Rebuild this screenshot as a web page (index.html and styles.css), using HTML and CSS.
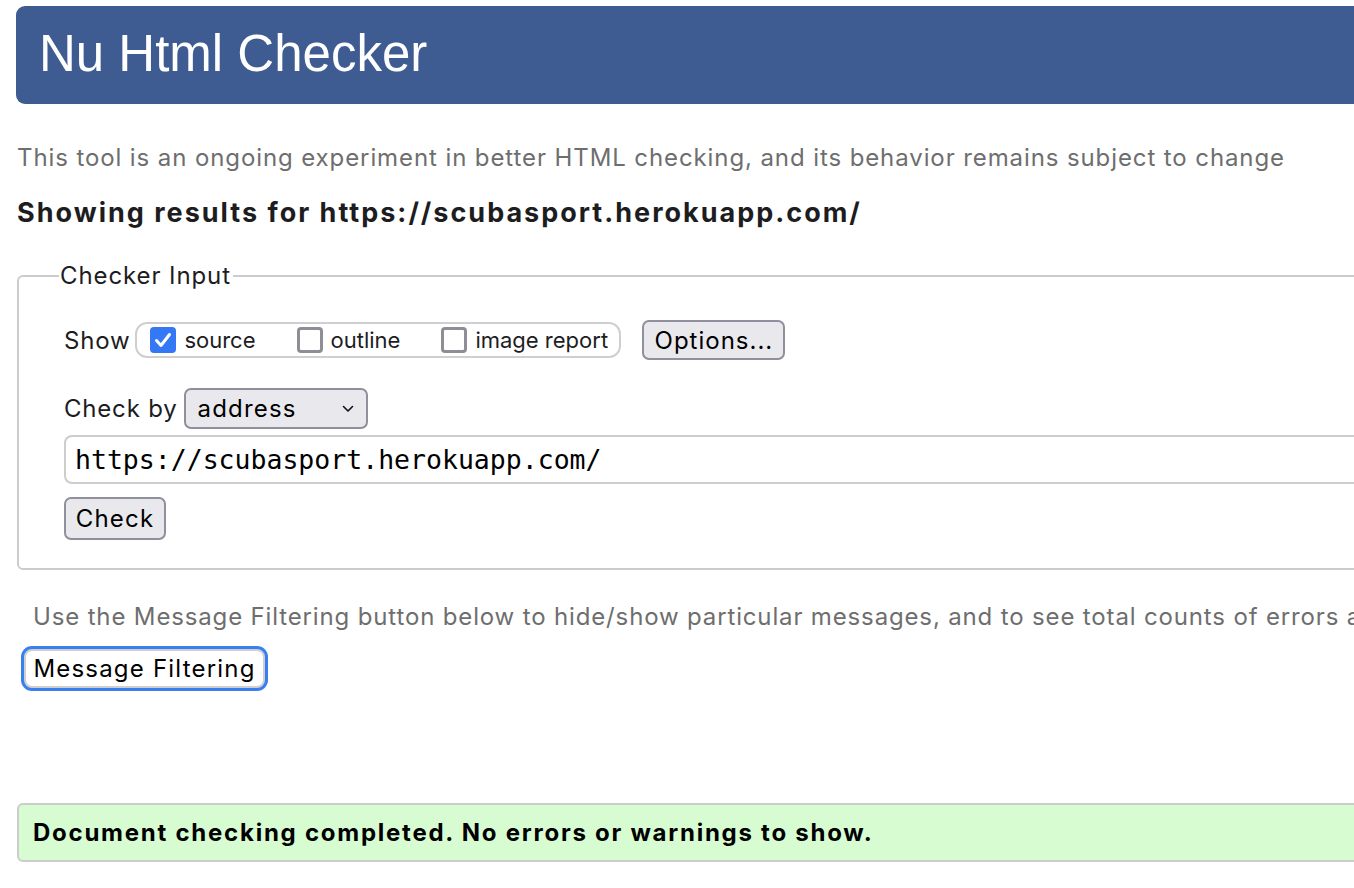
FILE: index.html
```html
<!DOCTYPE html>
<html lang="en">
<head>
<meta charset="utf-8">
<title>Nu Html Checker</title>
<link rel="stylesheet" href="styles.css">
</head>
<body>
<div class="page">
  <header class="masthead"><h1>Nu Html Checker</h1></header>
  <p class="tagline">This tool is an ongoing experiment in better HTML checking, and its behavior remains subject to change</p>
  <h2 class="results-title">Showing results for https://scubasport.herokuapp.com/</h2>

  <fieldset class="checker">
    <legend>Checker Input</legend>
    <div class="row show-row">
      <span class="row-label">Show</span>
      <div class="show-group">
        <label class="opt"><span class="cb checked"><svg viewBox="0 0 26 26" width="26" height="26"><path d="M6.5 13.5 L11 18.5 L19.5 7.5" fill="none" stroke="#fff" stroke-width="3" stroke-linecap="round" stroke-linejoin="round"/></svg></span><span>source</span></label>
        <label class="opt"><span class="cb"></span><span>outline</span></label>
        <label class="opt"><span class="cb"></span><span>image report</span></label>
      </div>
      <button class="btn options">Options...</button>
    </div>
    <div class="row by-row">
      <span class="row-label">Check by</span>
      <div class="select"><span>address</span><svg viewBox="0 0 12 8" width="12" height="8"><path d="M1.5 1.5 L6 6 L10.5 1.5" fill="none" stroke="#111" stroke-width="1.6" stroke-linecap="round" stroke-linejoin="round"/></svg></div>
    </div>
    <div class="url">https://scubasport.herokuapp.com/</div>
    <button class="btn check">Check</button>
  </fieldset>

  <p class="filter-note">Use the Message Filtering button below to hide/show particular messages, and to see total counts of errors and warnings.</p>
  <button class="btn filter">Message Filtering</button>

  <div class="success">Document checking completed. No errors or warnings to show.</div>
</div>
</body>
</html>
```
FILE: styles.css
```css
html, body {
  margin: 0;
  padding: 0;
  overflow: hidden;
  background: #fff;
}
body {
  font-family: Inter, "Liberation Sans", Arial, sans-serif;
  color: #1d1d1f;
}
.page {
  width: 1420px;
  padding: 6px 0 0 16px;
}
.masthead {
  height: 98px;
  background: #3e5c92;
  border-radius: 9px;
  display: flex;
  align-items: center;
  padding-left: 23px;
}
.masthead h1 {
  margin: 0;
  color: #fff;
  font-family: "Liberation Sans", Arial, sans-serif;
  font-weight: normal;
  font-size: 51px;
  line-height: 1;
  position: relative;
  top: -2px;
}
.tagline {
  margin: 40px 0 0 1px;
  font-size: 24px;
  letter-spacing: 0.9px;
  line-height: 28px;
  color: #6e6e6e;
  white-space: nowrap;
}
.results-title {
  margin: 26px 0 0 1px;
  font-size: 27px;
  letter-spacing: 2px;
  line-height: 30px;
  font-weight: bold;
  color: #1d1d1f;
  white-space: nowrap;
}
.checker {
  margin: 33px 0 0 1px;
  border: 2px solid #cccccc;
  border-radius: 6px;
  padding: 28px 0 28px 45px;
  min-width: 0;
}
.checker legend {
  font-size: 24px;
  letter-spacing: 0.9px;
  padding: 0 2px 0 1px;
  margin-left: -5px;
  color: #1d1d1f;
}
.row {
  display: flex;
  align-items: center;
}
.row-label {
  font-size: 24px;
  letter-spacing: 0.8px;
  color: #1d1d1f;
  white-space: nowrap;
}
.show-row {
  height: 44px;
}
.show-group {
  flex-shrink: 0;
  margin-left: 5px;
  height: 36px;
  box-sizing: border-box;
  border: 2px solid #cfcfcf;
  border-radius: 12px;
  display: flex;
  align-items: center;
  padding: 0 12px 0 13px;
  width: 486px;
}
.opt {
  display: flex;
  align-items: center;
  flex-shrink: 0;
  white-space: nowrap;
  font-size: 22px;
  color: #1d1d1f;
  gap: 8px;
  margin-right: 41px;
}
.opt:last-child { margin-right: 0; }
.cb {
  flex-shrink: 0;
  width: 26px;
  height: 26px;
  box-sizing: border-box;
  border: 3px solid #8e8e96;
  border-radius: 4px;
  background: #fff;
  display: block;
}
.cb.checked {
  background: #3478f6;
  border: none;
}
.cb svg { display: block; }
.btn {
  font-family: Inter, "Liberation Sans", Arial, sans-serif;
  font-size: 24px;
  letter-spacing: 1px;
  color: #000;
  background: #e9e9ed;
  border: 2px solid #8f8f9d;
  border-radius: 7px;
  padding: 0;
  cursor: pointer;
  white-space: nowrap;
}
.options {
  flex-shrink: 0;
  margin-left: 21px;
  width: 143px;
  height: 40px;
}
.by-row {
  margin-top: 26px;
  height: 41px;
}
.select {
  flex-shrink: 0;
  margin-left: 7px;
  width: 184px;
  height: 41px;
  box-sizing: border-box;
  background: #e9e9ed;
  border: 2px solid #8f8f9d;
  border-radius: 7px;
  display: flex;
  align-items: center;
  justify-content: space-between;
  padding: 0 12px 0 11px;
  font-size: 24px;
  letter-spacing: 1.2px;
  color: #000;
}
.url {
  margin-top: 6px;
  height: 49px;
  box-sizing: border-box;
  border: 2px solid #cdcdcd;
  border-right: none;
  border-radius: 8px 0 0 8px;
  display: flex;
  align-items: center;
  padding-left: 9px;
  font-family: "DejaVu Sans Mono", "Liberation Mono", monospace;
  font-size: 26.5px;
  color: #000;
}
.check {
  display: block;
  margin-top: 13px;
  width: 102px;
  height: 43px;
  letter-spacing: 1.2px;
}
.filter-note {
  margin: 33px 0 0 17px;
  font-size: 24px;
  letter-spacing: 0.85px;
  line-height: 28px;
  color: #6e6e6e;
  white-space: nowrap;
}
.filter {
  display: block;
  margin: 18px 0 0 8px;
  width: 241px;
  height: 39px;
  letter-spacing: 1.2px;
  background: #fff;
  border: 2px solid #cfcfcf;
  border-radius: 8px;
  box-shadow: 0 0 0 3px #3a7ff0;
}
.success {
  margin: 115px 0 0 1px;
  height: 59px;
  box-sizing: border-box;
  background: #d7fcd2;
  border: 2px solid #cccccc;
  border-radius: 6px;
  display: flex;
  align-items: center;
  padding-left: 14px;
  font-weight: bold;
  font-size: 24px;
  letter-spacing: 1.75px;
  color: #000;
}
```
